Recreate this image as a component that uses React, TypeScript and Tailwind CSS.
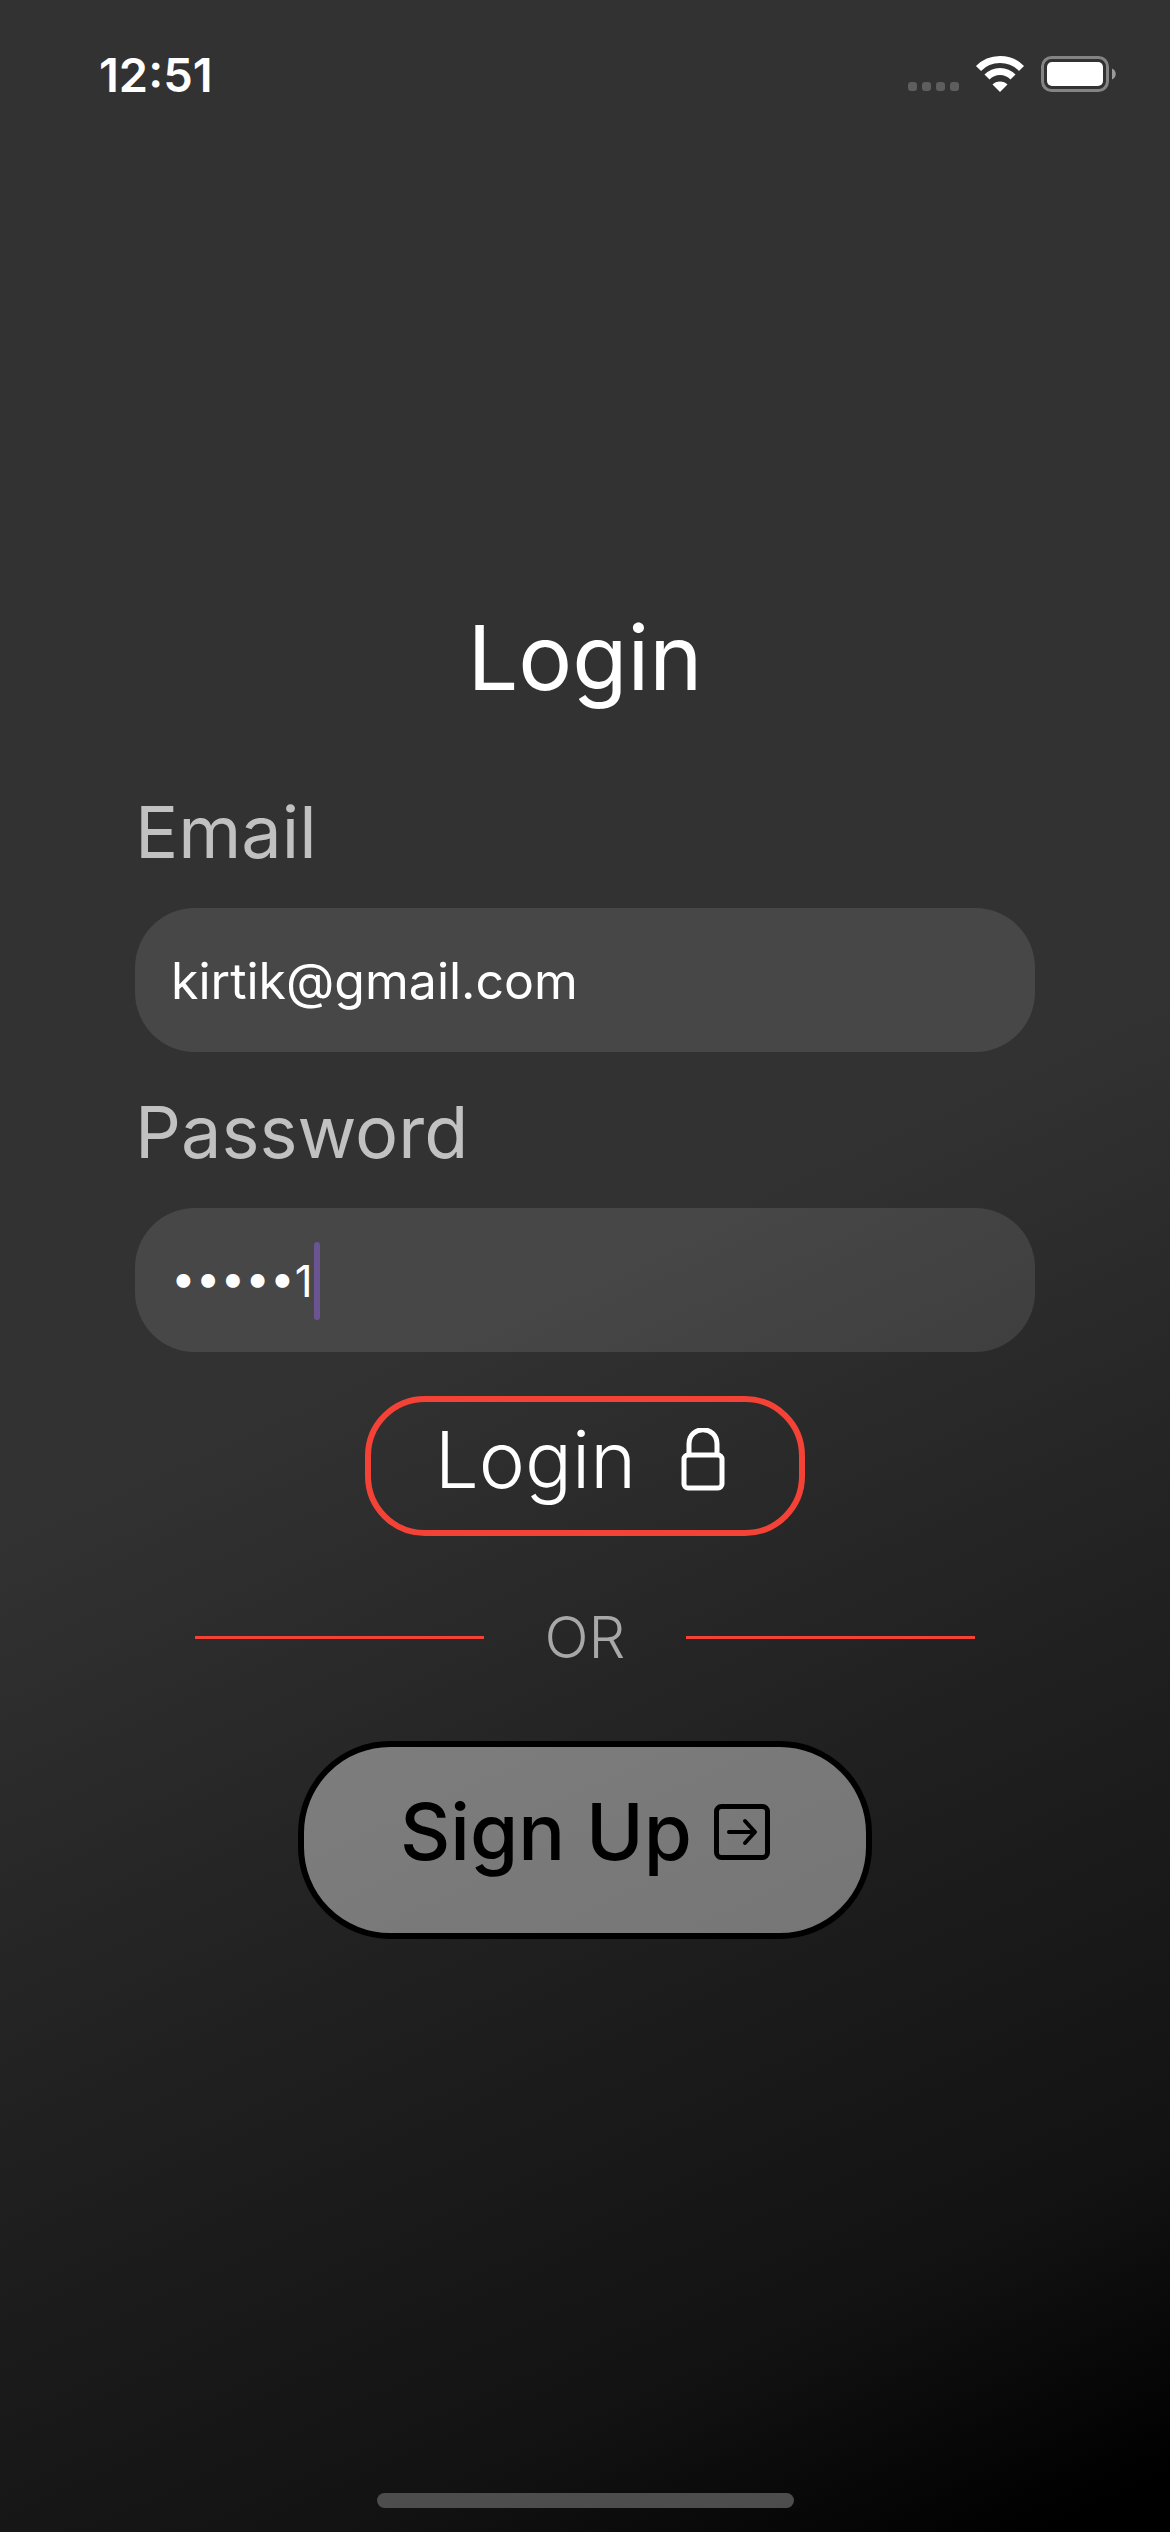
import { useState } from "react";

function StatusBar() {
  return (
    <header className="flex h-[150px] w-full items-center justify-between pl-[99px] pr-[53px]">
      <time className="text-[47px] leading-[56px] font-semibold">12:51</time>
      <div className="flex items-center gap-4">
        <svg width="52" height="38" viewBox="0 0 52 38" fill="#5e5e5e" aria-hidden="true">
          <rect x="1" y="26" width="9" height="9" rx="3" />
          <rect x="15" y="26" width="9" height="9" rx="3" />
          <rect x="29" y="26" width="9" height="9" rx="3" />
          <rect x="43" y="26" width="9" height="9" rx="3" />
        </svg>
        <svg width="50" height="38" viewBox="0 0 50 38" fill="none" aria-label="Wi-Fi">
          <path d="M3.5 12.5C15 0.5 35 0.5 46.5 12.5" stroke="#fff" strokeWidth="7" />
          <path d="M12 21C19 13.5 31 13.5 38 21" stroke="#fff" strokeWidth="7" />
          <path d="M25 36 17.5 28.5C21 24.5 29 24.5 32.5 28.5Z" fill="#fff" />
        </svg>
        <svg width="76" height="38" viewBox="0 0 76 38" aria-label="Battery">
          <rect x="1.5" y="1.5" width="65" height="33" rx="9" fill="none" stroke="#848484" strokeWidth="3" />
          <rect x="6" y="6" width="56" height="24" rx="5" fill="#fff" />
          <path d="M71 12.5C76 14.5 76 21.5 71 23.5Z" fill="#9a9a9a" />
        </svg>
      </div>
    </header>
  );
}

function LockIcon() {
  return (
    <svg width="44" height="64" viewBox="0 0 44 64" fill="none" stroke="#fff" strokeWidth="5" aria-hidden="true">
      <rect x="3" y="27" width="38" height="33" rx="4" />
      <path d="M8 27V16C8 -3 36 -3 36 16V27" />
    </svg>
  );
}

function ArrowBoxIcon() {
  return (
    <svg width="56" height="56" viewBox="0 0 56 56" fill="none" stroke="#000" strokeWidth="5" strokeLinecap="round" strokeLinejoin="round" aria-hidden="true">
      <rect x="2.5" y="2.5" width="51" height="51" rx="5" />
      <path d="M15 28H41M31 17L41 28L31 39" strokeWidth="4" />
    </svg>
  );
}

export default function App() {
  const [email, setEmail] = useState("kirtik@gmail.com");
  const [password, setPassword] = useState("•••••1");

  return (
    <div className="flex min-h-screen flex-col bg-[linear-gradient(155.2deg,#323232_50%,#202020_70%,#121212_88%,#000_98%)] font-['Inter',sans-serif] text-white">
      <StatusBar />
      <main className="mx-auto flex w-10/13 grow flex-col items-center pt-[452px]">
        <h1 className="text-[90px] leading-[112px] font-normal">Login</h1>
        <form className="mt-[62px] flex w-full flex-col items-center" onSubmit={(e) => e.preventDefault()}>
          <label htmlFor="email" className="w-full text-[72px] leading-[112px] font-normal text-[#c1c1c1]">Email</label>
          <input
            id="email"
            type="text"
            value={email}
            onChange={(e) => setEmail(e.target.value)}
            className="mt-5 h-36 w-full rounded-[60px] bg-white/10 px-9 pt-0.5 text-[50px] font-normal outline-none"
          />
          <label htmlFor="password" className="mt-6 w-full text-[72px] leading-[112px] font-normal text-[#c1c1c1]">Password</label>
          <div className="relative mt-5 w-full">
            <input
              id="password"
              type="text"
              value={password}
              onChange={(e) => setPassword(e.target.value)}
              className="h-36 w-full rounded-[60px] bg-white/10 px-9 pt-0.5 text-[44px] font-normal outline-none"
            />
            <span className="absolute top-[34px] left-[179px] h-[78px] w-1.5 rounded-full bg-[#6a5491]" />
          </div>
          <button type="submit" className="mt-11 flex h-[140px] items-center gap-[45px] rounded-[60px] border-6 border-[#f44336] pr-[74px] pb-3 pl-16 text-[78px] leading-[100px] font-light">
            Login
            <LockIcon />
          </button>
        </form>
        <div className="mt-[65px] flex w-13/15 items-center justify-between">
          <span className="h-[3px] w-[37%] bg-[#f44336]" />
          <span className="text-[58px] leading-[72px] font-light text-[#a8a8a8]">OR</span>
          <span className="h-[3px] w-[37%] bg-[#f44336]" />
        </div>
        <button type="button" className="mt-[68px] flex h-[198px] items-center gap-[22px] rounded-[92px] border-6 border-black bg-white/40 px-24 pb-4 text-[78px] leading-[100px] font-medium text-black">
          Sign Up
          <ArrowBoxIcon />
        </button>
      </main>
      <footer className="flex justify-center pb-6">
        <div className="h-[15px] w-[417px] rounded-full bg-[#4d4d4d]" />
      </footer>
    </div>
  );
}
